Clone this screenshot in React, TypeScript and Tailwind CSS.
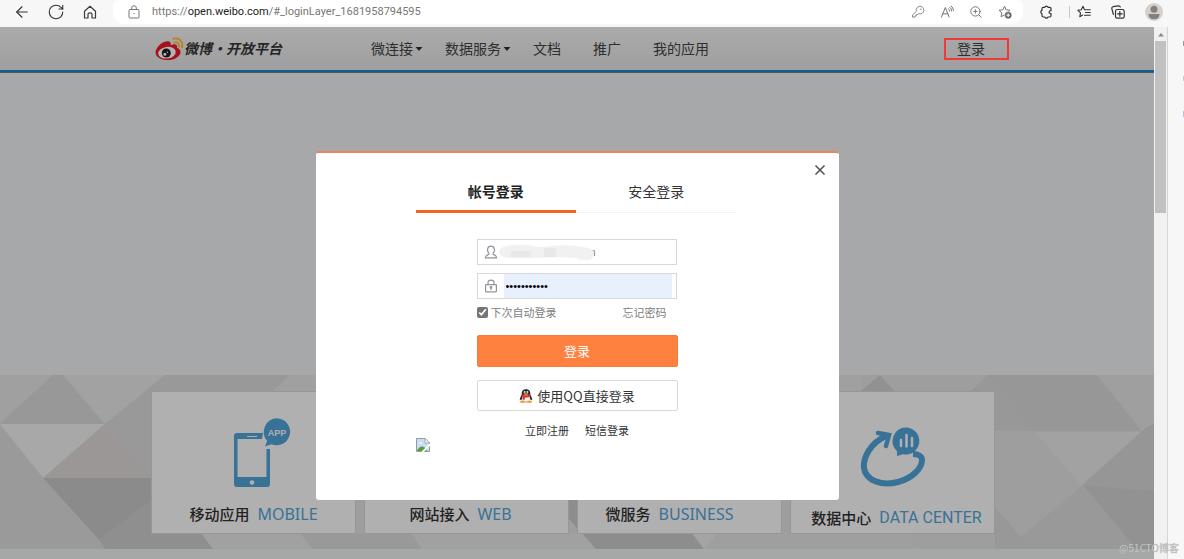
import React, { useState } from 'react';
import { ArrowLeft, RotateCw, ZoomIn, X } from 'lucide-react';

interface ProductCard {
  name: string;
  english: string;
  labelClass: string;
  englishClass: string;
  icon?: React.ReactNode;
}

const HomeIcon = () => (
  <svg viewBox="-2 -2 18 18" className="size-[18px]" fill="none" stroke="#3a3a3a" strokeWidth="1.2" strokeLinejoin="round">
    <path d="M1.5 6.2 7 1.3l5.500 4.900V13H9V9.200Q9 7.800 7 7.800T5 9.200V13H1.500z" />
  </svg>
);

const LockIcon = () => (
  <svg viewBox="0 0 12 14" className="h-[14px] w-3 shrink-0" fill="none" stroke="#777" strokeWidth="1">
    <rect x="1" y="4.500" width="10" height="8.500" rx="1" />
    <path d="M3.700 4.500V3a2.300 2.300 0 0 1 4.600 0v1.500" />
    <circle cx="6" cy="8.700" r=".6" fill="#777" stroke="none" />
  </svg>
);

const KeyIcon = () => (
  <svg viewBox="0 0 14 14" className="size-[14px]" fill="none" stroke="#888" strokeWidth="1" strokeLinejoin="round">
    <path d="M5.400 6.200a3.800 3.800 0 1 1 2.500 2.500L6.500 9.500H5.300v1.300H4v1.300H1.500V10z" />
    <circle cx="9.900" cy="4.200" r=".7" fill="#888" stroke="none" />
  </svg>
);

const ReadAloudIcon = () => (
  <svg viewBox="0 0 14 14" className="size-[14px]" fill="none" stroke="#777" strokeWidth="1" strokeLinecap="round">
    <path d="M1.500 12 5.300 2.500 9.100 12M2.800 8.800h5M8.500 3.700q1 .9 1 2.300M9.800 2.200Q11.700 3.500 11.700 6M11.200 1Q13.400 2.500 13.500 5.500" />
  </svg>
);

const STAR = 'M6.500 1.200 8.100 4.800 12 5.200 9.100 7.900 9.900 11.800 6.500 9.800 3.100 11.800 3.900 7.900 1 5.200 4.900 4.800z';

const StarAddIcon = () => (
  <svg viewBox="0 0 14 14" className="size-[14px]" fill="none" stroke="#777" strokeWidth="1" strokeLinejoin="round">
    <path d={STAR} />
    <circle cx="10.200" cy="10.200" r="3.700" fill="#666" stroke="#fff" strokeWidth=".6" />
    <path d="M10.200 8.400v3.600M8.400 10.200H12" stroke="#fff" />
  </svg>
);

const PuzzleIcon = () => (
  <svg viewBox="0 0 14 14" className="size-[14px]" fill="none" stroke="#333" strokeWidth="1.2" strokeLinejoin="round">
    <path d="M4.200 2.300h1.600a1.700 1.700 0 0 1 3.200 0h1.800q1.200 0 1.200 1.200v2.200a1.500 1.500 0 1 0 0 2.900v2.200q0 1.200-1.200 1.200H9a1.700 1.700 0 0 1-3.200 0H4.200Q3 12 3 10.800V8.800a1.800 1.800 0 0 1 0-3.400V3.500q0-1.200 1.200-1.200z" />
  </svg>
);

const FavoritesIcon = () => (
  <svg viewBox="0 0 14 14" className="size-[14px]" fill="none" stroke="#333" strokeWidth="1.100" strokeLinejoin="round" strokeLinecap="round">
    <path d="M7.500 4.700 6 1.200 4.300 4.800.7 5.200l2.800 2.700-.7 3.900L5.700 10M7.500 4.700h5.800M8.500 7.500h4.800M7.500 10.300h5.800" />
  </svg>
);

const CollectionsIcon = () => (
  <svg viewBox="0 0 14 14" className="size-[14px]" fill="none" stroke="#333" strokeWidth="1.200" strokeLinecap="round">
    <rect x="4.500" y="4.500" width="8.700" height="8.700" rx="1.700" />
    <path d="M8.850 6.500v4.700M6.500 8.850h4.700M2.400 9.500.9 3.800Q.5 2.200 2 1.700L7.300.8Q8.800.6 9.300 2" />
  </svg>
);

const Avatar = () => (
  <svg viewBox="0 0 18 18" className="size-[18px]">
    <circle cx="9" cy="9" r="9" fill="#d3d0cd" />
    <circle cx="9" cy="6.200" r="3.500" fill="#85807c" />
    <path d="M3.500 11h11q0 5.300-5.500 5.300T3.500 11z" fill="#85807c" />
  </svg>
);

const WeiboLogo = () => (
  <svg viewBox="0 0 29 24" className="h-6 w-[29px]">
    <path d="M11 4.500C5.500 5.500.6 11.300.6 15.500c0 4.700 5.600 7.600 12 7.600 7.600 0 12.900-4.300 12.900-8.200 0-2.400-2-3.700-3.500-4.200 1-3.100-2.200-4.300-6.400-2.500.8-2.800-.8-4.300-4.600-3.700z" fill="#a8101c" />
    <ellipse cx="12" cy="15.700" rx="8.800" ry="5.800" fill="#b4b4b4" transform="rotate(-8 12 15.700)" />
    <circle cx="11.300" cy="16" r="4.500" fill="#151515" />
    <circle cx="9.900" cy="17.200" r="1.500" fill="#b4b4b4" />
    <circle cx="12.500" cy="15.300" r=".7" fill="#b4b4b4" />
    <path d="M18.500 1.700c5-1.600 10.200 3 8.500 8.700M19.300 5.400c3-.8 5.300 1.500 4.500 4.200" fill="none" stroke="#b9852b" strokeWidth="2" strokeLinecap="round" />
  </svg>
);

const UserIcon = () => (
  <svg viewBox="0 0 14 14" className="size-[14px]" fill="none" stroke="#92929d" strokeWidth="1.200" strokeLinejoin="round">
    <path d="M4.900 8.100C2.600 5.800 3.200 1.200 7 1.200s4.400 4.600 2.100 6.900c-.5.700-.1 1.200.7 1.500 1.800.7 2.600 1.200 2.900 3.200H1.300c.3-2 1.100-2.500 2.900-3.200.8-.3 1.200-.8.7-1.500z" />
  </svg>
);

const PasswordIcon = () => (
  <svg viewBox="0 0 14 14" className="size-[14px]" fill="none" stroke="#92929d" strokeWidth="1.200">
    <rect x="1.600" y="5.600" width="10.800" height="7.200" rx=".5" />
    <path d="M4 5.600V3.500Q4 1.200 7 1.200t3 2.300v2.100M7 7.800v3.200" />
    <circle cx="7" cy="8.300" r=".8" />
  </svg>
);

const QQIcon = () => (
  <svg viewBox="0 0 14 14" className="size-[14px]">
    <path d="M3 5.500Q.6 8.500.7 11q.4.600 1.500-.8h9.600q1.100 1.400 1.500.8.100-2.500-2.300-5.500z" fill="#242832" />
    <ellipse cx="7" cy="8.800" rx="4.800" ry="4.700" fill="#242832" />
    <ellipse cx="7" cy="9.700" rx="4" ry="3.900" fill="#f5f5f5" />
    <path d="M2.700 5.500C2.400 2 4.200.2 7 .2s4.600 1.800 4.300 5.300z" fill="#242832" />
    <ellipse cx="5.600" cy="3.100" rx=".9" ry="1.200" fill="#fff" />
    <ellipse cx="8.400" cy="3.100" rx=".9" ry="1.200" fill="#fff" />
    <circle cx="5.900" cy="3.200" r=".4" fill="#111" />
    <circle cx="8.100" cy="3.200" r=".4" fill="#111" />
    <ellipse cx="7" cy="5" rx="2.600" ry=".8" fill="#f3a51c" />
    <path d="M2.200 5.400Q7 7.300 11.800 5.400l.4 1.900Q9 8.900 5.800 8.500v2.300l-2.300-.2.200-2.800-1.900-.7z" fill="#df2a20" />
    <ellipse cx="3.700" cy="12.800" rx="3" ry="1.100" fill="#ee9d38" />
    <ellipse cx="10.300" cy="12.800" rx="3" ry="1.100" fill="#ee9d38" />
  </svg>
);

const BrokenImage = () => (
  <svg viewBox="0 0 14 14" className="size-[14px]" role="img" aria-label="broken image">
    <path d="M.5.500h8.500l4.500 4.500v8.500H.5z" fill="#c9dcf5" stroke="#999" />
    <path d="M9 .5V5h4.500z" fill="#fff" stroke="#999" strokeWidth=".8" />
    <path d="M3 5.500q0-1.500 1.500-1.500t1.500 1.500z" fill="#fff" />
    <path d="M1 13c1-3 3-4.500 5-4.500s4 1.500 5 4.500z" fill="#4fa336" />
    <path d="M6 14.500 14.500 6" stroke="#fff" strokeWidth="1.800" />
  </svg>
);

const MobileIcon = () => (
  <svg viewBox="-16 0 74 70" className="h-[70px] w-[74px]">
    <path d="M4 15h26l-1 6H4.500v38h29V31H37v35q0 3-3 3H4q-3 0-3-3V18q0-3 3-3z" fill="#387297" />
    <path d="M14 18.500h10" stroke="#b0b0b0" />
    <circle cx="19" cy="64.500" r="2.300" fill="#b0b0b0" />
    <path d="M44 .3a13.500 13.500 0 1 1-5.500 26l-6.500 2.200 2.200-5.800A13.500 13.500 0 0 1 44 .3z" fill="#387297" />
    <text x="44" y="18" textAnchor="middle" fill="#b0b0b0" className="font-['Liberation_Sans'] text-[9px] font-bold">APP</text>
  </svg>
);

const DataIcon = () => (
  <svg viewBox="0 0 66 62" className="h-[62px] w-[66px]">
    <path d="M26 10C10 17 3 32 4 42c2 13 18 18 34 14 15-4 24-14 24-22 0-4-4-6-9-6" fill="none" stroke="#387297" strokeWidth="6" />
    <path d="M18 7 29 9l-3 11" fill="none" stroke="#387297" strokeWidth="4.500" strokeLinecap="round" />
    <path d="M46 1.500a13.500 13.500 0 1 1-3 26.700L37 30v-5A13.500 13.500 0 0 1 46 1.500z" fill="#387297" />
    <path d="M41 14v6M46.500 9v11.500M52 12v8" stroke="#b0b0b0" strokeWidth="2.500" strokeLinecap="round" />
  </svg>
);

// faceted backdrop behind the product cards
const FACETS = [
  ['0,0 53,0 0,47', '#a0a0a0'],
  ['0,49 53,0 63,0 105,49', '#989898'],
  ['63,0 165,0 105,49', '#a2a2a2'],
  ['165,0 290,0 260,30 152,103 105,49', '#999999'],
  ['290,0 861,0 861,16 273,16', '#a0a0a0'],
  ['0,49 105,49 43,103', '#a8a8a8'],
  ['105,49 152,103 43,103', '#9b9797'],
  ['43,103 160,103 160,120 99,165', '#8b8b8b'],
  ['99,165 160,118 201,158 213,174 105,174', '#8f8f8f'],
  ['0,50 43,103 105,174 0,174', '#9a9a9a'],
  ['201,158 300,158 313,174 213,174', '#a1a1a1'],
  ['300,158 411,158 422,174 313,174', '#999999'],
  ['411,158 583,158 596,174 422,174', '#a1a1a1'],
  ['569,120 569,144 596,174 704,174 692,158 600,120', '#8d8d8d'],
  ['692,158 718,158 704,174', '#a4a4a4'],
  ['718,158 910,158 922,174 704,174', '#9f9f9f'],
  ['861,16 880,0 894,16', '#919191'],
  ['971,16 988,0 1035,56 995,55', '#989898'],
  ['988,0 1097,0 1142,56 1035,56', '#979797'],
  ['1097,0 1154,0 1154,48 1142,56', '#9f9f9f'],
  ['1035,57 1142,57 1081,110', '#a2a2a2'],
  ['1142,56 1154,48 1154,116 1083,110', '#969696'],
  ['1083,110 1154,116 1154,174 1136,174', '#929292'],
  ['1021,162 1083,110 1136,174 1030,174', '#999999'],
  ['995,132 1021,162 1030,174 995,174', '#989898'],
];

const NAV_ITEMS = [
  { label: '微连接', caret: true },
  { label: '数据服务', caret: true },
  { label: '文档', caret: false },
  { label: '推广', caret: false },
  { label: '我的应用', caret: false },
];

const CARDS: ProductCard[] = [
  { name: '移动应用', english: 'MOBILE', labelClass: '', englishClass: "font-['Noto_Sans']", icon: <MobileIcon /> },
  { name: '网站接入', english: 'WEB', labelClass: 'pr-3', englishClass: "font-['Noto_Sans']" },
  { name: '微服务', english: 'BUSINESS', labelClass: 'pr-5', englishClass: "font-['Noto_Sans']" },
  { name: '数据中心', english: 'DATA CENTER', labelClass: 'pl-2 pt-1', englishClass: 'font-[Roboto]', icon: <DataIcon /> },
];

const BrowserBar = () => (
  <div className="flex h-[27px] shrink-0 items-start bg-[#f7f7f7] pl-[13px] pr-[21px]">
    <div className="flex h-6 items-center gap-4">
      <button type="button" aria-label="Back"><ArrowLeft className="size-[18px] text-[#333]" strokeWidth={1.5} /></button>
      <button type="button" aria-label="Refresh"><RotateCw className="size-[18px] text-[#333]" strokeWidth={1.5} /></button>
      <button type="button" aria-label="Home"><HomeIcon /></button>
    </div>
    <div className="ml-[14px] flex h-6 min-w-0 flex-1 items-center rounded-b-xl rounded-t-md bg-white pl-[15px] pr-[11px]">
      <LockIcon />
      <span className="ml-3 flex-1 truncate font-[Roboto] text-[11px] text-[#777]">
        https://<span className="text-[#222]">open.weibo.com</span>/#_loginLayer_1681958794595
      </span>
      <div className="flex items-center gap-[15px]">
        <KeyIcon />
        <ReadAloudIcon />
        <ZoomIn className="size-[14px] text-[#777]" strokeWidth={1.7} />
        <StarAddIcon />
      </div>
    </div>
    <div className="ml-4 flex h-6 items-center">
      <button type="button" aria-label="Extensions"><PuzzleIcon /></button>
      <span className="ml-4 mr-[7px] h-3 w-px bg-[#c8c8c8]" />
      <button type="button" aria-label="Favorites"><FavoritesIcon /></button>
      <button type="button" aria-label="Collections" className="mx-5"><CollectionsIcon /></button>
      <button type="button" aria-label="Profile"><Avatar /></button>
    </div>
  </div>
);

const SiteHeader = () => (
  <header className="h-[46px] border-b border-[#555] bg-linear-to-b from-[#ababab] to-[#9e9e9e]">
    <div className="h-[45px] border-b-2 border-[#0d5f92]">
      <div className="mx-auto flex h-full w-[864px] items-center pl-[10px]">
        <a href="#home" className="flex w-[216px] items-center text-[14px] font-bold italic text-[#252525]">
          <WeiboLogo />微博·开放平台
        </a>
        <nav className="flex flex-1 text-[14px] text-[#2e2e2e]">
          {NAV_ITEMS.map((item) => (
            <a
              key={item.label}
              href="#nav"
              className={item.caret ? 'mr-[22px] flex items-center gap-[2px]' : 'mr-8'}
            >
              {item.label}
              {item.caret && (
                <svg viewBox="0 0 8 4" className="h-1 w-2"><path d="M.5 0h7L4 4z" fill="#222" /></svg>
              )}
            </a>
          ))}
        </nav>
        <button type="button" className="h-[22px] w-[65px] border-2 border-[#f03a3a] pb-[2px] pl-[11px] text-left text-[14px] leading-4 text-[#2e2e2e]">
          登录
        </button>
      </div>
    </div>
  </header>
);

const Products = () => (
  <section className="relative h-[174px] bg-[#9e9e9e]">
    <svg viewBox="0 0 1154 174" preserveAspectRatio="none" className="absolute inset-0 size-full">
      {FACETS.map(([points, fill]) => (
        <polygon key={points} points={points} fill={fill} />
      ))}
    </svg>
    <div className="relative mx-auto flex w-[852px] gap-2 pt-4">
      {CARDS.map((card) => (
        <article key={card.name} className="flex h-[143px] w-[205px] flex-col items-center border border-[#979797] bg-[#b0b0b0] pt-[25px]">
          <div className="flex h-[71px] items-end">{card.icon}</div>
          <h3 className={`mt-4 flex items-center gap-2 whitespace-nowrap text-[15px] leading-5 font-medium text-[#222] ${card.labelClass}`}>
            {card.name}
            <span className={`text-[16px] font-normal text-[#387297] ${card.englishClass}`}>{card.english}</span>
          </h3>
        </article>
      ))}
    </div>
  </section>
);

const LoginDialog = () => {
  const [remember, setRemember] = useState(true);

  return (
    <div role="dialog" aria-label="帐号登录" className="relative min-h-[349px] w-[523px] rounded-[3px] border-t-2 border-[#e98558] bg-white pl-[100px] pr-[102px] pt-[14px]">
      <button type="button" aria-label="Close" className="absolute right-[11px] top-[9px] text-[#555]">
        <X className="size-4" strokeWidth={2.5} />
      </button>

      <div role="tablist" className="flex text-[14px]">
        <button type="button" role="tab" aria-selected="true" className="h-[46px] flex-1 border-b-3 border-[#f76421] pt-[5px] font-bold text-[#222]">帐号登录</button>
        <button type="button" role="tab" aria-selected="false" className="h-[46px] flex-1 border-b border-[#f2f2f2] pt-[3px] text-[#333]">安全登录</button>
      </div>

      <form className="ml-[61px] mt-[26px] w-[201px]" onSubmit={(e) => e.preventDefault()}>
        <label className="relative flex h-[26px] w-[200px] items-center border border-[#d9d9d9] pl-[6px]">
          <UserIcon />
          <input type="text" aria-label="帐号" defaultValue="n" className="min-w-0 flex-1 pl-[92px] font-['Liberation_Sans'] text-[11px] text-[#8b7355] outline-none" />
          <svg viewBox="0 0 98 18" className="absolute left-5 top-[3px] h-[18px] w-[98px]">
            <path d="M1 9Q2 3 12 2.500q12-1.500 23 .5t22-.5q15-1 24 1 12 1 15 5 1 7-6 8.500-7 1-12-2-15-1-29-.5-16 1-30 .5Q1 16 1 9z" fill="#f1f1f1" />
            <path d="M13 8h20v6H13zM46 5h12v9H46z" fill="#e8e8e8" />
          </svg>
        </label>
        <label className="mt-2 flex h-[26px] w-[200px] items-center border border-[#d9d9d9] pl-[6px] pr-1">
          <PasswordIcon />
          <input type="password" aria-label="密码" defaultValue="12345678901" className="ml-[6px] h-full min-w-0 flex-1 bg-[#e8f0fe] pl-[2px] font-['Liberation_Sans'] text-[11px] text-black outline-none" />
        </label>
        <div className="mt-1 flex h-[18px] items-center justify-between pr-[11px] text-[11px] text-[#808080]">
          <label className="flex items-center gap-[3px]">
            <input
              type="checkbox"
              checked={remember}
              onChange={(e) => setRemember(e.target.checked)}
              className="size-[11px] accent-[#757575]"
            />
            下次自动登录
          </label>
          <a href="#forgot">忘记密码</a>
        </div>
        <button type="submit" className="mt-[14px] block h-8 w-full rounded-[2px] border border-[#f57a3e] bg-[#ff8140] text-[13px] text-white">登录</button>
        <button type="button" className="mt-[13px] flex h-[31px] w-full items-center justify-center gap-1 rounded-[2px] border border-[#d9d9d9] text-[13px] text-[#333]">
          <QQIcon />使用QQ直接登录
        </button>
        <div className="mt-[11px] flex h-4 items-center justify-center gap-4 text-[11px] text-[#333]">
          <a href="#register">立即注册</a>
          <a href="#sms">短信登录</a>
        </div>
      </form>
      <BrokenImage />
    </div>
  );
};

const App: React.FC = () => {
  return (
    <div className="flex h-screen flex-col overflow-hidden bg-[#f7f7f7] font-['Noto_Sans_CJK_SC',sans-serif]">
      <BrowserBar />
      <div className="flex min-h-0 flex-1">
        <main className="relative flex min-w-0 flex-1 flex-col bg-[#a6a8a7]">
          <SiteHeader />
          <div className="h-[302px] bg-[#a6a8a9]" />
          <Products />
          <div className="absolute inset-0 flex items-start justify-center pt-[124px]">
            <LoginDialog />
          </div>
        </main>

        {/* Scrollbar */}
        <div className="flex w-[14px] flex-col items-center border-r border-[#d5d5d5] bg-[#f1f1f1]">
          <svg viewBox="0 0 12 14" className="h-[14px] w-3"><path d="M3 9.500 6 6l3 3.500z" fill="#8b8b8b" /></svg>
          <div className="h-[172px] w-[11px] bg-[#c1c1c1]" />
        </div>
        <aside className="flex w-4 flex-col items-end gap-[30px] pt-[14px]">
          <span className="h-[5px] w-px bg-[#999]" />
          <span className="h-[5px] w-px bg-[#c3cbea]" />
          <span className="h-[6px] w-px bg-[#a9c8ea]" />
        </aside>
      </div>
      <span className="fixed bottom-[3px] right-[5px] text-[10px] leading-4 text-[#c4c4c4] [text-shadow:0_0_1px_#999]">@51CTO博客</span>
    </div>
  );
};

export default App;
